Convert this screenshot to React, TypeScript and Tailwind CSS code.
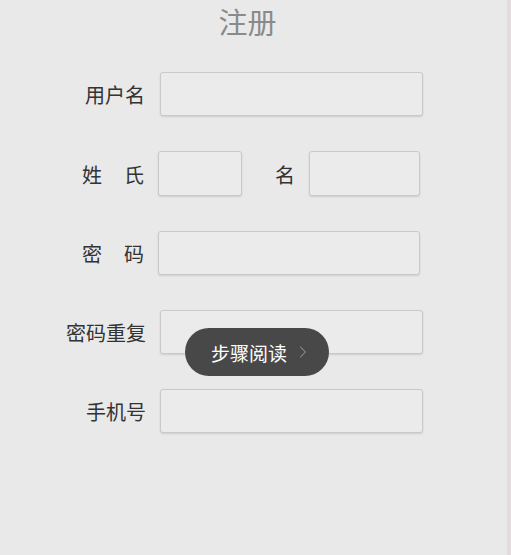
import { ChevronRight } from "lucide-react";

const font = { fontFamily: '"Noto Sans CJK SC", "Noto Sans", sans-serif' };

function Field({ className }: { className: string }) {
  return (
    <div
      className={`h-[44px] rounded-[3px] border border-[#c9c9c9] bg-[#ebebeb] shadow-[0_1px_2px_rgba(0,0,0,0.12)] ${className}`}
    />
  );
}

export default function App() {
  return (
    <div className="relative flex h-[555px] w-[511px] bg-[#e9e9e9]" style={font}>
      <div className="flex flex-1 flex-col">
        {/* Title */}
        <div className="h-[42px] pr-[12px] text-center text-[29px] leading-[42px] text-[#8a8a8a]">
          注册
        </div>

        <div className="mt-[30px] flex flex-col">
          {/* 用户名 */}
          <div className="flex h-[44px] items-center">
            <div className="w-[146px] pt-[2px] pr-[1px] text-right text-[20px] text-[#333]">用户名</div>
            <Field className="ml-[14px] w-[263px]" />
          </div>

          {/* 姓 氏 / 名 */}
          <div className="mt-[35px] flex h-[45px] items-center">
            <div className="ml-[82px] flex w-[62px] justify-between pt-[2px] text-[20px] text-[#333]">
              <span>姓</span>
              <span>氏</span>
            </div>
            <Field className="ml-[14px] h-[45px] w-[84px]" />
            <span className="ml-[33px] pt-[2px] text-[20px] text-[#333]">名</span>
            <Field className="ml-[14px] h-[45px] w-[111px]" />
          </div>

          {/* 密 码 */}
          <div className="mt-[35px] flex h-[43px] items-center">
            <div className="ml-[82px] flex w-[62px] justify-between pt-[2px] text-[20px] text-[#333]">
              <span>密</span>
              <span>码</span>
            </div>
            <Field className="ml-[14px] h-[43px] w-[262px]" />
          </div>

          {/* 密码重复 */}
          <div className="mt-[36px] flex h-[43px] items-center">
            <div className="w-[146px] pt-[2px] text-right text-[20px] text-[#333]">密码重复</div>
            <Field className="ml-[14px] h-[43px] w-[263px]" />
          </div>

          {/* 手机号 */}
          <div className="mt-[36px] flex h-[44px] items-center">
            <div className="w-[146px] pt-[2px] text-right text-[20px] text-[#333]">手机号</div>
            <Field className="ml-[14px] w-[263px]" />
          </div>
        </div>
      </div>

      {/* right edge strip */}
      <div className="w-[4px] bg-[#e4dcdc]" />

      {/* Step reading pill */}
      <div className="absolute left-[185px] top-[328px] flex h-[48px] w-[144px] items-center rounded-full bg-[#484848] pl-[26px]">
        <span className="text-[19px] leading-none text-white">步骤阅读</span>
        <ChevronRight className="ml-[6px] h-[20px] w-[20px] text-[#8f8f8f]" strokeWidth={1.25} />
      </div>
    </div>
  );
}
